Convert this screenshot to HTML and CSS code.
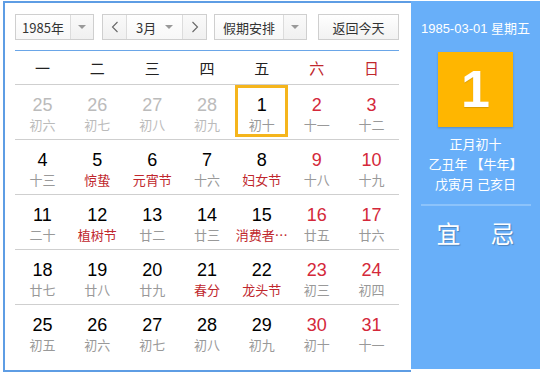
FILE: index.html
```html
<!DOCTYPE html>
<html lang="zh-CN">
<head>
  <meta charset="UTF-8" />
  <title>万年历</title>
  <link rel="stylesheet" href="styles.css">
</head>
<body>
  <div class="calendar">
    <div class="main">
      <div class="toolbar">
        <div class="select year-select">
          <span class="select-text">1985年</span>
          <span class="select-arrow"><i class="caret"></i></span>
        </div>
        <div class="select month-select">
          <span class="nav-btn">
            <svg width="8" height="12" viewBox="0 0 8 12"><path d="M6.5 1 L1.5 6 L6.5 11" fill="none" stroke="#666" stroke-width="1.1"/></svg>
          </span>
          <span class="month-text">3月<i class="caret"></i></span>
          <span class="nav-btn">
            <svg width="8" height="12" viewBox="0 0 8 12"><path d="M1.5 1 L6.5 6 L1.5 11" fill="none" stroke="#666" stroke-width="1.1"/></svg>
          </span>
        </div>
        <div class="select holiday-select">
          <span class="select-text">假期安排</span>
          <span class="select-arrow"><i class="caret"></i></span>
        </div>
        <button class="today-btn">返回今天</button>
      </div>
      <div class="week-head">
        <span>一</span><span>二</span><span>三</span><span>四</span><span>五</span>
        <span class="weekend">六</span><span class="weekend">日</span>
      </div>
      <div class="days" id="days"></div>
    </div>
    <div class="side">
      <div class="side-date">1985-03-01 星期五</div>
      <div class="big-day">1</div>
      <div class="side-lunar">
        <div>正月初十</div>
        <div>乙丑年 【牛年】</div>
        <div>戊寅月 己亥日</div>
      </div>
      <div class="side-line"></div>
      <div class="yiji"><span>宜</span><span>忌</span></div>
    </div>
  </div>
  <script>
    // [day, lunar, type] type: o = other month, f = festival, s = selected
    const days = [
      [25,"初六","o"],[26,"初七","o"],[27,"初八","o"],[28,"初九","o"],[1,"初十","s"],[2,"十一"],[3,"十二"],
      [4,"十三"],[5,"惊蛰","f"],[6,"元宵节","f"],[7,"十六"],[8,"妇女节","f"],[9,"十八"],[10,"十九"],
      [11,"二十"],[12,"植树节","f"],[13,"廿二"],[14,"廿三"],[15,"消费者…","f"],[16,"廿五"],[17,"廿六"],
      [18,"廿七"],[19,"廿八"],[20,"廿九"],[21,"春分","f"],[22,"龙头节","f"],[23,"初三"],[24,"初四"],
      [25,"初五"],[26,"初六"],[27,"初七"],[28,"初八"],[29,"初九"],[30,"初十"],[31,"十一"]
    ];
    const box = document.getElementById("days");
    for (let r = 0; r < 5; r++) {
      const row = document.createElement("div");
      row.className = "week-row";
      for (let c = 0; c < 7; c++) {
        const [num, lunar, type] = days[r * 7 + c];
        const cell = document.createElement("div");
        cell.className = "day";
        if (type === "o") cell.classList.add("other");
        if (type === "s") cell.classList.add("selected");
        if (c >= 5 && type !== "o") cell.classList.add("weekend");
        cell.innerHTML = `<span class="num">${num}</span><span class="lunar${type === "f" ? " festival" : ""}">${lunar}</span>`;
        row.appendChild(cell);
      }
      box.appendChild(row);
    }
  </script>
</body>
</html>
```

FILE: styles.css
```css
* { box-sizing: border-box; }
body {
  margin: 0;
  padding: 1px 0 0 3px;
  font-family: "Liberation Sans", "Noto Sans CJK SC", sans-serif;
  background: #fff;
  color: #000;
}
.calendar {
  display: flex;
  width: 537px;
}
.main {
  width: 408px;
  height: 371px;
  border: 2px solid #5e9de4;
  border-right: none;
  padding: 11px 12px 0 10px;
}
.toolbar {
  display: flex;
  height: 26px;
  font-size: 13px;
  font-family: "Noto Sans CJK SC", "Liberation Sans", sans-serif;
  color: #333;
}
.select {
  display: flex;
  border: 1px solid #cfcfcf;
  background: linear-gradient(#fff, #f7f7f7);
}
.select-text {
  display: flex;
  align-items: center;
  justify-content: center;
  border-right: 1px solid #dcdcdc;
}
.select-arrow {
  display: flex;
  align-items: center;
  justify-content: center;
  flex: 1;
  background: linear-gradient(#fafafa, #f0f0f0);
}
.caret {
  display: inline-block;
  width: 0;
  height: 0;
  border-left: 4px solid transparent;
  border-right: 4px solid transparent;
  border-top: 4px solid #999;
}
.year-select { width: 79px; }
.year-select .select-text { width: 55px; }
.month-select {
  width: 105px;
  margin-left: 8px;
}
.nav-btn {
  width: 23px;
  display: flex;
  align-items: center;
  justify-content: center;
  background: linear-gradient(#fafafa, #f0f0f0);
}
.month-text {
  flex: 1;
  display: flex;
  align-items: center;
  justify-content: space-between;
  padding: 0 9px 0 9px;
  border-left: 1px solid #dcdcdc;
  border-right: 1px solid #dcdcdc;
}
.holiday-select {
  width: 93px;
  margin-left: 7px;
}
.holiday-select .select-text { width: 69px; }
.today-btn {
  width: 81px;
  margin-left: 11px;
  border: 1px solid #cfcfcf;
  background: linear-gradient(#fff, #f2f2f2);
  font: inherit;
  color: #333;
  padding: 0;
}
.week-head {
  display: flex;
  margin-top: 10px;
  border-top: 1px solid #6aa6e8;
  border-bottom: 1px solid #cfcfcf;
  height: 35px;
  align-items: center;
  font-size: 15px;
  font-family: "Noto Sans CJK SC", sans-serif;
  color: #222;
}
.week-head span {
  flex: 1;
  text-align: center;
}
.week-head .weekend { color: #c0272d; }
.week-row {
  display: flex;
  height: 55px;
  border-bottom: 1px solid #cfcfcf;
}
.week-row:last-child { border-bottom: none; }
.day {
  flex: 1;
  display: flex;
  flex-direction: column;
  align-items: center;
  padding-top: 9px;
  margin: 0 1px 2px;
  border: 3px solid transparent;
  border-top: none;
  white-space: nowrap;
  min-width: 0;
}
.num {
  font-size: 18px;
  line-height: 22px;
}
.lunar {
  font-size: 13px;
  line-height: 18px;
  color: #999;
  font-family: "Noto Sans CJK SC", sans-serif;
}
.lunar.festival { color: #c0272d; }
.weekend .num { color: #d4283a; }
.other .num, .other .lunar { color: #bbb; }
.selected {
  border: 3px solid #f5b51c;
  padding-top: 6px;
}
.side {
  width: 129px;
  height: 368px;
  background: #68aff9;
  color: #fff;
  display: flex;
  flex-direction: column;
  align-items: center;
  font-family: "Liberation Sans", "Noto Sans CJK SC", sans-serif;
}
.side-date {
  margin-top: 19px;
  font-size: 13px;
  line-height: 18px;
}
.big-day {
  margin-top: 14px;
  width: 75px;
  height: 75px;
  background: #ffb600;
  font-size: 52px;
  font-weight: bold;
  line-height: 75px;
  text-align: center;
  box-shadow: 0 1px 2px rgba(0,0,0,0.2);
  text-shadow: 0 1px 1px rgba(0,0,0,0.15);
}
.side-lunar {
  margin-top: 7px;
  font-size: 13px;
  line-height: 20px;
  text-align: center;
  font-family: "Noto Sans CJK SC", sans-serif;
}
.side-line {
  margin-top: 10px;
  width: 110px;
  height: 2px;
  background: #8cc3fb;
}
.yiji {
  margin-top: 13px;
  display: flex;
  gap: 30px;
  font-size: 24px;
  line-height: 28px;
  font-family: "Noto Sans CJK SC", sans-serif;
  text-shadow: 1px 1px 1px rgba(0,0,0,0.25);
}
```
